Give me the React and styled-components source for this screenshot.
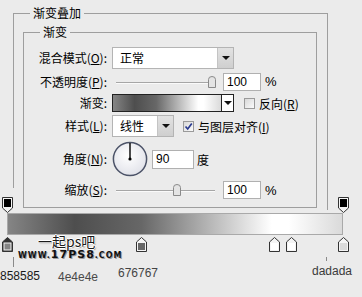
import React from "react";
import styled, { createGlobalStyle } from "styled-components";

const GRADIENT =
  "linear-gradient(to right, #858585 0%, #4e4e4e 20%, #676767 40%, #ffffff 79%, #ffffff 84%, #dadada 100%)";

const topStops = [0, 100];
const bottomStops = [
  { pos: 0, color: "#858585", active: true },
  { pos: 40, color: "#676767" },
  { pos: 79.5, color: "#ffffff" },
  { pos: 84.5, color: "#ffffff" },
  { pos: 100, color: "#dadada" },
];
const notes = [
  { text: "858585", x: 0, y: 17, color: "#1a1a1a" },
  { text: "4e4e4e", x: 58, y: 18, color: "#4a4a4a" },
  { text: "676767", x: 118, y: 14, color: "#444" },
  { text: "dadada", x: 312, y: 12, color: "#3a3a3a" },
];

const GlobalStyle = createGlobalStyle`
  html, body {
    margin: 0;
    padding: 0;
    background: #ebebeb;
  }
  body {
    width: 362px;
    height: 297px;
    overflow: hidden;
    font-family: "Noto Sans CJK SC", "Liberation Sans", sans-serif;
    font-size: 12px;
    color: #000;
  }
`;

const Page = styled.div`
  position: relative;
  padding-top: 5px;
  height: 292px;
`;

const Group = styled.fieldset`
  box-sizing: border-box;
  min-width: 0;
  margin: ${(p) => (p.$outer ? "0 0 0 13px" : "3px 0 0 9px")};
  width: ${(p) => (p.$outer ? "315px" : "294px")};
  padding: ${(p) => (p.$outer ? "0 0 2px 0" : "7px 0 8px 0")};
  border: 1px solid #9e9e9e;
  border-bottom: ${(p) => (p.$outer ? "none" : "1px solid #9e9e9e")};
`;

const Legend = styled.legend`
  margin-left: 16px;
  padding: 0 3px;
  height: 16px;
  line-height: 16px;
  font-size: 12px;
`;

const Form = styled.div`
  display: flex;
  flex-direction: column;
  gap: 3px;
`;

const Row = styled.div`
  display: flex;
  align-items: center;
  height: ${(p) => p.$h}px;
`;

const Label = styled.div`
  width: 83px;
  margin-right: 5px;
  text-align: right;
  white-space: nowrap;
  line-height: 14px;
`;

const Select = styled.div`
  box-sizing: border-box;
  display: flex;
  width: ${(p) => p.$w}px;
  height: 22px;
  border: 1px solid #b4b4b4;
  background: #fff;
`;

const SelectText = styled.div`
  flex: 1;
  padding-left: 7px;
  line-height: 20px;
`;

const DropButton = styled.div`
  box-sizing: border-box;
  width: 16px;
  display: flex;
  align-items: center;
  justify-content: center;
  border-left: 1px solid #c4c4c4;
  background: linear-gradient(#e2e2e2, #cfcfcf);
`;

const Arrow = styled.span`
  width: 0;
  height: 0;
  border-left: 4px solid transparent;
  border-right: 4px solid transparent;
  border-top: 4px solid #111;
`;

const SliderBox = styled.div`
  position: relative;
  width: 106px;
  height: 100%;
`;

const SliderTrack = styled.div`
  position: absolute;
  left: 4px;
  right: 3px;
  top: 50%;
  border-top: 1px solid #a6a6a6;
  border-bottom: 1px solid #fafafa;
`;

const Thumb = styled.svg`
  position: absolute;
  top: 50%;
  margin-top: -6px;
  margin-left: -4px;
`;

const NumInput = styled.div`
  box-sizing: border-box;
  width: ${(p) => p.$w}px;
  height: ${(p) => p.$h || 18}px;
  margin-left: ${(p) => p.$ml}px;
  padding-left: 3px;
  border: 1px solid #b0b0b0;
  background: #fff;
  font-family: "Liberation Sans", Arial, sans-serif;
  font-size: 12px;
  line-height: ${(p) => (p.$h || 18) - 2}px;
`;

const Unit = styled.span`
  margin-left: ${(p) => p.$ml}px;
  font-family: ${(p) => (p.$latin ? '"Liberation Sans", Arial, sans-serif' : "inherit")};
  font-size: ${(p) => (p.$latin ? 13 : 12)}px;
`;

const Swatch = styled.div`
  box-sizing: border-box;
  display: flex;
  width: 122px;
  height: 18px;
  border: 1px solid #222;
`;

const SwatchFill = styled.div`
  flex: 1;
  background: ${GRADIENT};
`;

const SwatchButton = styled.div`
  width: 11px;
  display: flex;
  align-items: center;
  justify-content: center;
  border-left: 1px solid #222;
  background: #fff;
`;

const CheckLabel = styled.label`
  display: flex;
  align-items: center;
  gap: 4px;
  margin-left: ${(p) => p.$ml}px;
  white-space: nowrap;
`;

const Box = styled.span`
  box-sizing: border-box;
  width: 11px;
  height: 11px;
  display: flex;
  align-items: center;
  justify-content: center;
  border: 1px solid #9a9a9a;
  background: linear-gradient(135deg, #d8d8d8, #fbfbfb);
`;

const Editor = styled.div`
  margin-top: -22px;
  position: relative;
`;

const StopRow = styled.div`
  position: relative;
  margin: ${(p) => (p.$top ? "0 19px 0 7px" : "2px 19px 0 7px")};
  height: ${(p) => (p.$top ? 25 : 15)}px;

  &::before {
    content: "";
    display: ${(p) => (p.$top ? "block" : "none")};
    position: absolute;
    left: -7px;
    top: 0;
    width: 16px;
    height: 100%;
    background: #ebebeb;
  }
`;

const StopMark = styled.svg`
  position: absolute;
  bottom: 0;
  margin-left: -5px;
`;

const Bar = styled.div`
  box-sizing: border-box;
  margin: 0 19px 0 7px;
  height: 22px;
  border: 1px solid #a9a9a9;
  background: ${GRADIENT};
`;

const Notes = styled.div`
  position: relative;
  height: 45px;
`;

const Note = styled.span`
  position: absolute;
  font-family: "Liberation Sans", Arial, sans-serif;
  font-size: 12px;
  line-height: 14px;
`;

const Tick = styled.span`
  position: absolute;
  width: 1px;
  background: #8a8a8a;
`;

const Watermark = styled.div`
  position: absolute;
  left: 18px;
  top: 234px;
  display: flex;
  flex-direction: column;
  gap: 0;
  pointer-events: none;
`;

const MarkCn = styled.span`
  margin-left: 20px;
  font-size: 14px;
  line-height: 14px;
  color: #1b1b1b;
  text-shadow: 1px 0 0 #fff, -1px 0 0 #fff, 0 1px 0 #fff, 0 -1px 0 #fff, 1px 1px 1px #777;
`;

const MarkUrl = styled.span`
  margin-top: 1px;
  font-family: "DejaVu Sans", sans-serif;
  font-weight: bold;
  line-height: 10px;
  letter-spacing: 1px;
  color: #111;
  text-shadow: 1px 1px 0 #9a9a9a;
`;

const MarkPart = styled.span`
  font-size: ${(p) => p.$size}px;
`;

const Dropdown = ({ width, children }) => (
  <Select $w={width}>
    <SelectText>{children}</SelectText>
    <DropButton>
      <Arrow />
    </DropButton>
  </Select>
);

const Slider = ({ value }) => (
  <SliderBox>
    <SliderTrack />
    <Thumb width="8" height="12" style={{ left: `calc(4px + ${value} * 96px)` }}>
      <path d="M0.5 11.5 V3.5 Q0.5 0.5 4 0.5 Q7.5 0.5 7.5 3.5 V11.5 Z" fill="#e4e4e4" stroke="#8a8a8a" />
    </Thumb>
  </SliderBox>
);

const Checkbox = ({ checked }) => (
  <Box>
    {checked && (
      <svg width="9" height="9">
        <path d="M1.5 4.5 L3.7 7 L7.8 1.5" fill="none" stroke="#2a3b8f" strokeWidth="1.7" />
      </svg>
    )}
  </Box>
);

const Dial = () => (
  <svg width="36" height="36">
    <defs>
      <radialGradient id="dialFill" cx="45%" cy="40%" r="60%">
        <stop offset="0%" stopColor="#ffffff" />
        <stop offset="100%" stopColor="#e2e3ea" />
      </radialGradient>
    </defs>
    <circle cx="18" cy="18" r="16.6" fill="url(#dialFill)" stroke="#4c5368" strokeWidth="1.5" />
    <line x1="18" y1="18" x2="18" y2="2" stroke="#000" strokeWidth="1.4" />
    <circle cx="18" cy="18" r="1.6" fill="#000" />
  </svg>
);

const TopStop = ({ pos }) => (
  <StopMark width="11" height="16" style={{ left: `${pos}%` }}>
    <path d="M0.5 0.5 H10.5 V11 L5.5 15.5 L0.5 11 Z" fill="#f4f4f4" stroke="#333" />
    <rect x="2" y="2" width="7" height="8" fill="#000" />
  </StopMark>
);

const BottomStop = ({ pos, color, active }) => (
  <StopMark width="11" height="15" style={{ left: `${pos}%` }}>
    <path d="M5.5 0.5 L10.5 5 V14.5 H0.5 V5 Z" fill={active ? "#333" : "#f4f4f4"} stroke="#333" />
    <rect x="2" y="6" width="7" height="7" fill={color} stroke={active ? "#f4f4f4" : "none"} />
  </StopMark>
);

export default function App() {
  return (
    <>
      <GlobalStyle />
      <Page>
        <Group $outer>
          <Legend>渐变叠加</Legend>
          <Group>
            <Legend>渐变</Legend>
            <Form>
              <Row $h={22}>
                <Label>
                  混合模式(<u>O</u>):
                </Label>
                <Dropdown width={122}>正常</Dropdown>
              </Row>
              <Row $h={19}>
                <Label>
                  不透明度(<u>P</u>):
                </Label>
                <Slider value={1} />
                <NumInput $w={38} $ml={5}>100</NumInput>
                <Unit $ml={4} $latin>%</Unit>
              </Row>
              <Row $h={18}>
                <Label>渐变:</Label>
                <Swatch>
                  <SwatchFill />
                  <SwatchButton>
                    <Arrow />
                  </SwatchButton>
                </Swatch>
                <CheckLabel $ml={10}>
                  <Checkbox />
                  <span>
                    反向(<u>R</u>)
                  </span>
                </CheckLabel>
              </Row>
              <Row $h={22}>
                <Label>
                  样式(<u>L</u>):
                </Label>
                <Dropdown width={62}>线性</Dropdown>
                <CheckLabel $ml={9}>
                  <Checkbox checked />
                  <span>
                    与图层对齐(<u>I</u>)
                  </span>
                </CheckLabel>
              </Row>
              <Row $h={38}>
                <Label>
                  角度(<u>N</u>):
                </Label>
                <Dial />
                <NumInput $w={42} $h={19} $ml={4}>90</NumInput>
                <Unit $ml={3}>度</Unit>
              </Row>
              <Row $h={18}>
                <Label>
                  缩放(<u>S</u>):
                </Label>
                <Slider value={0.64} />
                <NumInput $w={38} $ml={5}>100</NumInput>
                <Unit $ml={4} $latin>%</Unit>
              </Row>
            </Form>
          </Group>
        </Group>

        <Editor>
          <StopRow $top>
            {topStops.map((pos) => (
              <TopStop key={pos} pos={pos} />
            ))}
          </StopRow>
          <Bar />
          <StopRow>
            {bottomStops.map((s) => (
              <BottomStop key={s.pos} {...s} />
            ))}
          </StopRow>
          <Notes>
            <Tick style={{ left: 13, top: 5, height: 10 }} />
            <Tick style={{ left: 326, top: 5, height: 4 }} />
            {notes.map((n) => (
              <Note key={n.text} style={{ left: n.x, top: n.y, color: n.color }}>
                {n.text}
              </Note>
            ))}
          </Notes>
        </Editor>

        <Watermark>
          <MarkCn>一起ps吧</MarkCn>
          <MarkUrl>
            <MarkPart $size={8}>WWW.</MarkPart>
            <MarkPart $size={11}>17PS8</MarkPart>
            <MarkPart $size={8}>.COM</MarkPart>
          </MarkUrl>
        </Watermark>
      </Page>
    </>
  );
}
